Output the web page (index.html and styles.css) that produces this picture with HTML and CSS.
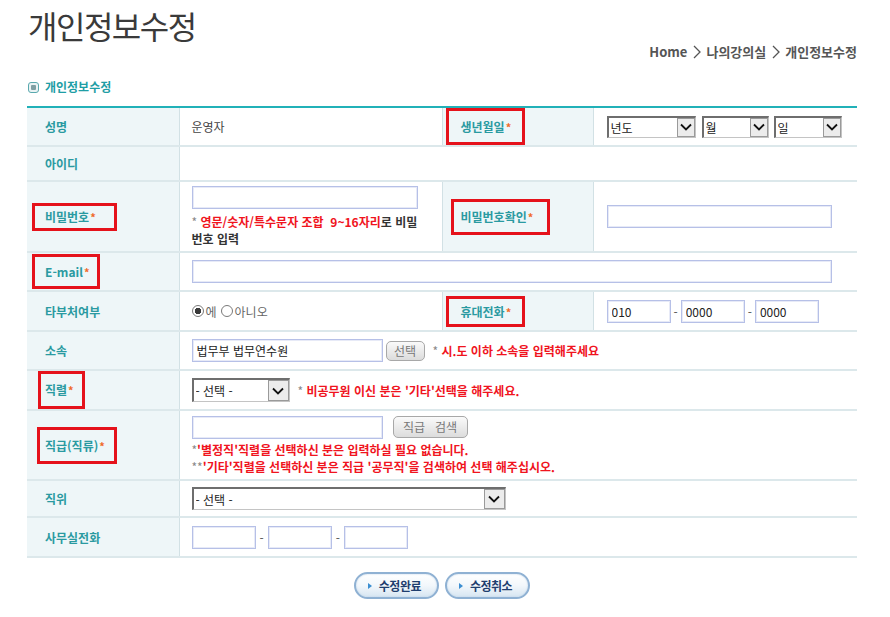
FILE: index.html
```html
<!DOCTYPE html>
<html lang="ko">
<head>
  <meta charset="UTF-8">
  <meta name="viewport" content="width=device-width, initial-scale=1.0">
  <link rel="stylesheet" href="styles.css">
  <title>개인정보수정</title>
</head>
<body>
  <div class="page">
    <h1 class="page-title">개인정보수정</h1>
    <div class="breadcrumb">
      Home<svg class="crumb-sep" width="12" height="14" viewBox="0 0 12 14"><path d="M3 1 L9 7 L3 13" fill="none" stroke="#555" stroke-width="1.3"/></svg>나의강의실<svg class="crumb-sep" width="12" height="14" viewBox="0 0 12 14"><path d="M3 1 L9 7 L3 13" fill="none" stroke="#555" stroke-width="1.3"/></svg>개인정보수정
    </div>

    <h2 class="section-title">
      <svg width="11" height="11" viewBox="0 0 11 11"><rect x="0.5" y="0.5" width="10" height="10" rx="2.5" fill="#eaf3f4" stroke="#5aa9ae"/><rect x="3" y="3" width="5" height="5" rx="1" fill="#7f9fa3"/></svg>
      개인정보수정
    </h2>

    <table class="form-table">
      <colgroup>
        <col class="col-label">
        <col class="col-value">
        <col class="col-label2">
        <col>
      </colgroup>
      <tr class="h37">
        <th class="label">성명</th>
        <td class="value value-mid">운영자</td>
        <th class="label"><span class="req-box req-birth">생년월일<em class="star">*</em></span></th>
        <td class="value value-right">
          <div class="field-line gap-5">
            <span class="select-wrap w-year"><select class="select"><option>년도</option></select><span class="select-arrow"><svg width="12" height="8" viewBox="0 0 12 8"><path d="M1 1.5 L6 6.5 L11 1.5" fill="none" stroke="#111" stroke-width="1.8"/></svg></span></span>
            <span class="select-wrap w-month"><select class="select"><option>월</option></select><span class="select-arrow"><svg width="12" height="8" viewBox="0 0 12 8"><path d="M1 1.5 L6 6.5 L11 1.5" fill="none" stroke="#111" stroke-width="1.8"/></svg></span></span>
            <span class="select-wrap w-day"><select class="select"><option>일</option></select><span class="select-arrow"><svg width="12" height="8" viewBox="0 0 12 8"><path d="M1 1.5 L6 6.5 L11 1.5" fill="none" stroke="#111" stroke-width="1.8"/></svg></span></span>
          </div>
        </td>
      </tr>
      <tr class="h35">
        <th class="label">아이디</th>
        <td class="value" colspan="3"></td>
      </tr>
      <tr class="h71">
        <th class="label"><span class="req-box req-pw">비밀번호<em class="star">*</em></span></th>
        <td class="value value-mid">
          <input class="input w-pw" type="password">
          <p class="note">
            <span class="note-mark">*</span> <span class="red">영문/숫자/특수문자 조합&nbsp; 9~16자리</span>로 비밀<br>번호 입력
          </p>
        </td>
        <th class="label"><span class="req-box req-pw2">비밀번호확인<em class="star">*</em></span></th>
        <td class="value value-right"><input class="input w-pw2" type="password"></td>
      </tr>
      <tr class="h39">
        <th class="label"><span class="req-box req-mail">E-mail<em class="star">*</em></span></th>
        <td class="value" colspan="3"><input class="input w-full" type="text"></td>
      </tr>
      <tr class="h40">
        <th class="label">타부처여부</th>
        <td class="value value-mid">
          <div class="field-line radios">
            <label class="radio-item"><input class="radio" type="radio" name="other" checked>에</label>
            <label class="radio-item"><input class="radio" type="radio" name="other">아니오</label>
          </div>
        </td>
        <th class="label"><span class="req-box req-mobile">휴대전화<em class="star">*</em></span></th>
        <td class="value value-right">
          <div class="field-line gap-3">
            <input class="input w-tel" type="text" value="010">
            <span class="dash">-</span>
            <input class="input w-tel" type="text" value="0000">
            <span class="dash">-</span>
            <input class="input w-tel" type="text" value="0000">
          </div>
        </td>
      </tr>
      <tr class="h39">
        <th class="label">소속</th>
        <td class="value" colspan="3">
          <div class="field-line">
            <input class="input w-org" type="text" value="법무부 법무연수원">
            <button class="btn-gray btn-small" type="button">선택</button>
            <span class="inline-note"><span class="note-mark">*</span> <span class="red">시.도 이하 소속을 입력해주세요</span></span>
          </div>
        </td>
      </tr>
      <tr class="h38">
        <th class="label"><span class="req-box req-series">직렬<em class="star">*</em></span></th>
        <td class="value" colspan="3">
          <div class="field-line">
            <span class="select-wrap w-series"><select class="select"><option>- 선택 -</option></select><span class="select-arrow arrow-wide"><svg width="12" height="8" viewBox="0 0 12 8"><path d="M1 1.5 L6 6.5 L11 1.5" fill="none" stroke="#111" stroke-width="1.8"/></svg></span></span>
            <span class="inline-note"><span class="note-mark">*</span> <span class="red">비공무원 이신 분은 '기타'선택을 해주세요.</span></span>
          </div>
        </td>
      </tr>
      <tr class="h70">
        <th class="label"><span class="req-box req-grade">직급(직류)<em class="star">*</em></span></th>
        <td class="value" colspan="3">
          <div class="field-line">
            <input class="input w-org" type="text">
            <button class="btn-gray btn-search" type="button">직급&nbsp;&nbsp; 검색</button>
          </div>
          <p class="note red note-grade">
            <span class="note-mark">*</span>'별정직'직렬을 선택하신 분은 입력하실 필요 없습니다.<br>
            <span class="note-mark">**</span>'기타'직렬을 선택하신 분은 직급 '공무직'을 검색하여 선택 해주십시오.
          </p>
        </td>
      </tr>
      <tr class="h37">
        <th class="label">직위</th>
        <td class="value" colspan="3">
          <span class="select-wrap w-position"><select class="select"><option>- 선택 -</option></select><span class="select-arrow arrow-wide"><svg width="12" height="8" viewBox="0 0 12 8"><path d="M1 1.5 L6 6.5 L11 1.5" fill="none" stroke="#111" stroke-width="1.8"/></svg></span></span>
        </td>
      </tr>
      <tr class="h40">
        <th class="label">사무실전화</th>
        <td class="value" colspan="3">
          <div class="field-line gap-4">
            <input class="input w-tel" type="text">
            <span class="dash">-</span>
            <input class="input w-tel" type="text">
            <span class="dash">-</span>
            <input class="input w-tel" type="text">
          </div>
        </td>
      </tr>
    </table>

    <div class="actions">
      <button class="btn-pill" type="button"><span class="pill-arrow"></span>수정완료</button>
      <button class="btn-pill" type="button"><span class="pill-arrow"></span>수정취소</button>
    </div>
  </div>
</body>
</html>
```

FILE: styles.css
```css
body {
  margin: 0;
  font-family: "Noto Sans CJK KR", "Liberation Sans", sans-serif;
  font-size: 12px;
  color: #333;
  background-color: #fff;
}

.page {
  width: 830px;
  margin-left: 27px;
}

.page-title {
  margin: 0;
  padding: 6px 0 0 1px;
  font-size: 32px;
  line-height: 38px;
  font-weight: 400;
  letter-spacing: -1.5px;
  color: #3a3a3a;
}

.breadcrumb {
  text-align: right;
  font-size: 13px;
  line-height: 16px;
  font-weight: 700;
  letter-spacing: 0;
  color: #555;
}

.crumb-sep {
  margin: 0 3px 0 4px;
  vertical-align: -2px;
}

.section-title {
  display: flex;
  align-items: center;
  gap: 6px;
  margin: 19px 0 0;
  padding-left: 1px;
  font-size: 12px;
  line-height: 16px;
  font-weight: 700;
  color: #1f9ea5;
}

/* table */
.form-table {
  width: 100%;
  margin-top: 11px;
  border-collapse: collapse;
  table-layout: fixed;
  border-top: 2px solid #21b1b8;
}

.col-label {
  width: 152px;
}

.col-value {
  width: 263px;
}

.col-label2 {
  width: 151px;
}

.form-table th,
.form-table td {
  padding: 0;
  text-align: left;
  vertical-align: middle;
  border-bottom: 2px solid #dce8eb;
}

.h35 { height: 35px; }
.h37 { height: 37px; }
.h38 { height: 38px; }
.h39 { height: 39px; }
.h40 { height: 40px; }
.h70 { height: 70px; }
.h71 { height: 71px; }

.label {
  padding-left: 18px !important;
  background-color: #eef6f8;
  border-right: 1px solid #d2e1e5;
  color: #2a9aa1;
  font-weight: 700;
  font-size: 12px;
  white-space: nowrap;
}

.value {
  padding-left: 12px !important;
  color: #444;
}

.value-mid {
  padding-right: 4px !important;
  border-right: 1px solid #d2e1e5;
}

.value-right {
  padding-left: 13px !important;
}

.star {
  font-style: normal;
  font-size: 11px;
  color: #f06a2a;
  margin-left: 1px;
}

/* red annotation boxes */
.req-box {
  display: inline-block;
  border: 3px solid #e5121b;
  line-height: 15px;
}

.req-birth { padding: 8px 11px 7px 12px; margin-left: -15px; }
.req-pw { padding: 3px 18px 3px 10px; margin-left: -13px; }
.req-pw2 { padding: 7px 14px 7px 7px; margin-left: -10px; }
.req-mail { padding: 7px 7px 6px 10px; margin-left: -13px; }
.req-mobile { padding: 5px 11px 4px 12px; margin-left: -15px; }
.req-series { padding: 8px 8px 8px 4px; margin-left: -7px; }
.req-grade { padding: 8px 9px 7px 5px; margin-left: -8px; }

/* controls */
.field-line {
  display: flex;
  align-items: center;
}

.gap-3 { gap: 3px; }
.gap-4 { gap: 4px; }
.gap-5 { gap: 5px; }

.input {
  box-sizing: border-box;
  height: 23px;
  margin: 0;
  padding: 0 4px;
  border: 1px solid #b6c0e7;
  box-shadow: inset 0 0 0 1px #e7eaf7;
  font-family: "Noto Sans CJK KR", "Liberation Sans", sans-serif;
  font-size: 12px;
  color: #222;
  background-color: #fff;
}

.w-pw { width: 226px; display: block; }
.w-pw2 { width: 225px; }
.w-full { width: 640px; }
.w-tel { width: 64px; }
.w-org { width: 191px; }

.dash {
  color: #555;
  font-size: 12px;
}

.select-wrap {
  position: relative;
  display: inline-block;
  height: 22px;
}

.select {
  box-sizing: border-box;
  width: 100%;
  height: 100%;
  margin: 0;
  padding: 0 0 0 2px;
  appearance: none;
  border-style: solid;
  border-width: 2px 1px 1px 2px;
  border-color: #6e6e6e #c4c4c4 #c4c4c4 #6e6e6e;
  border-radius: 0;
  background-color: #fff;
  font-family: "Noto Sans CJK KR", "Liberation Sans", sans-serif;
  font-size: 12px;
  color: #222;
}

.select-arrow {
  position: absolute;
  top: 2px;
  right: 1px;
  bottom: 1px;
  width: 18px;
  display: flex;
  align-items: center;
  justify-content: center;
  box-sizing: border-box;
  border: 1px solid #9a9a9a;
  background-color: #ececec;
}

.arrow-wide {
  width: 21px;
}

.w-year { width: 89px; }
.w-month { width: 67px; margin-left: 1px; }
.w-day { width: 68px; }
.w-series { width: 98px; height: 24px; }
.w-position { width: 314px; height: 23px; }

.radios {
  gap: 4px;
  color: #666;
}

.radio-item {
  display: flex;
  align-items: center;
  gap: 2px;
}

.radio {
  appearance: none;
  width: 12px;
  height: 12px;
  margin: 0;
  border: 1px solid #7a7a7a;
  border-radius: 50%;
  background-color: #fff;
}

.radio:checked {
  background: radial-gradient(circle, #3a3a3a 0 3px, #fff 3.5px);
}

.note {
  margin: 4px 0 0;
  font-size: 12px;
  line-height: 17px;
  font-weight: 700;
  color: #333;
}

.note-mark {
  color: #888;
  font-weight: 400;
}

.red {
  color: #f0141e;
  font-weight: 700;
}

.note-grade {
  margin-top: 2px;
}

.inline-note {
  margin-left: 8px;
  font-size: 12px;
}

.btn-gray {
  margin: 0;
  border: 1px solid #a8a8a8;
  border-radius: 5px;
  background: linear-gradient(#fafafa, #dcdcdc);
  color: #777;
  font-family: "Noto Sans CJK KR", "Liberation Sans", sans-serif;
  font-size: 12px;
  padding: 0;
}

.btn-small {
  width: 39px;
  height: 20px;
  margin-left: 3px;
  line-height: 16px;
}

.btn-search {
  width: 75px;
  height: 22px;
  margin-left: 10px;
  line-height: 18px;
}

.actions {
  display: flex;
  justify-content: center;
  gap: 6px;
  margin-top: 14px;
}

.btn-pill {
  display: flex;
  align-items: center;
  height: 27px;
  padding: 0 16px 0 12px;
  border: 2px solid #8fb1d3;
  border-radius: 14px;
  background: linear-gradient(#ffffff 0%, #f2f7fb 50%, #d7e6f2 100%);
  box-shadow: inset 0 0 2px #b7cfe6;
  color: #1f3e6e;
  font-family: "Noto Sans CJK KR", "Liberation Sans", sans-serif;
  font-size: 12px;
  font-weight: 700;
  letter-spacing: -0.5px;
}

.pill-arrow {
  width: 0;
  height: 0;
  margin-right: 7px;
  border-top: 3px solid transparent;
  border-bottom: 3px solid transparent;
  border-left: 4px solid #3b8ed1;
}
```
